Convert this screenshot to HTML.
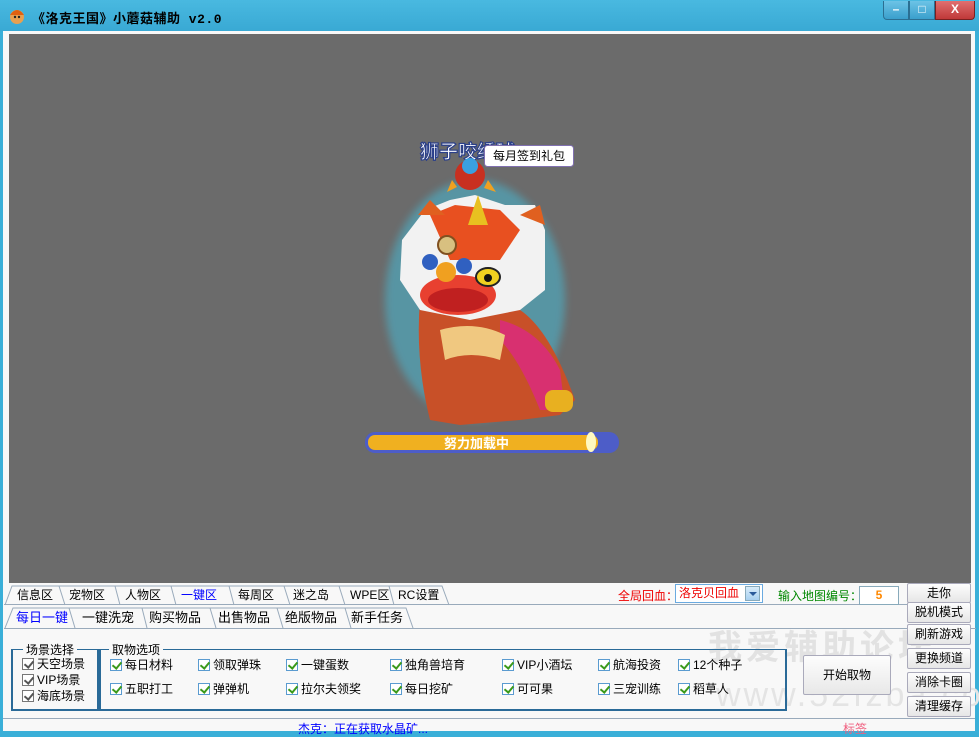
<!DOCTYPE html>
<html><head><meta charset="utf-8"><style>
*{margin:0;padding:0;box-sizing:border-box}
body{width:979px;height:734px;overflow:hidden;background:#3aafd8;font-family:"Liberation Sans","Noto Sans CJK SC",sans-serif;font-size:12px;position:relative}
.a{position:absolute}
.title{left:0;top:0;width:979px;height:31px;background:linear-gradient(#49b9e0,#39a9d4)}
.tt{left:32px;top:8px;font-size:13px;font-weight:bold;color:#000;letter-spacing:0.5px;font-family:"Liberation Mono","Noto Sans CJK SC",monospace}
.wb{top:1px;height:19px;border:1px solid #2b6f92;border-top:none;color:#fff;text-align:center;font-weight:bold;font-size:12px;line-height:17px}
.client{left:3px;top:31px;width:972px;height:700px;background:#f8f8f8}
.game{left:9px;top:34px;width:962px;height:549px;background:#6b6b6b}
.cb{display:inline-block;width:12px;height:12px;border:1px solid #5a9bd0;background:#fff;position:relative;vertical-align:-2px;margin-right:3px}
.cb:after{content:"";position:absolute;left:3px;top:0px;width:4px;height:7px;border:solid #3a9a1a;border-width:0 2px 2px 0;transform:rotate(40deg)}
.g .cb{border-color:#777}.g .cb:after{border-color:#555}
.it{position:absolute;font-size:12px;white-space:nowrap}
.btn{left:907px;width:64px;height:21px;border:1px solid #aab;background:linear-gradient(#fdfdfd,#e6e6e6);font-size:12px;text-align:center;line-height:19px;border-radius:2px}
</style></head><body>
<div class="a title"></div>
<svg class="a" style="left:8px;top:7px" width="18" height="18"><circle cx="9" cy="10" r="7" fill="#e8a050"/><path d="M2 8 Q9 -2 16 8 Z" fill="#e06010"/><circle cx="7" cy="10" r="1.2" fill="#222"/><circle cx="11" cy="10" r="1.2" fill="#222"/></svg>
<div class="a tt">《洛克王国》小蘑菇辅助 v2.0</div>
<div class="a wb" style="left:883px;width:26px;background:linear-gradient(#6cc3e6,#3a9fcc);border-radius:0 0 0 4px">–</div>
<div class="a wb" style="left:909px;width:26px;background:linear-gradient(#6cc3e6,#3a9fcc)">□</div>
<div class="a wb" style="left:935px;width:40px;background:linear-gradient(#e07070,#c03838);border-color:#7a2020;border-radius:0 0 4px 0">X</div>
<div class="a client"></div>
<div class="a game">
<svg width="962" height="549" style="position:absolute;left:0;top:0">
<defs><filter id="gl"><feGaussianBlur stdDeviation="4"/></filter></defs>
<g transform="translate(-9,-34)">
<ellipse cx="475" cy="300" rx="90" ry="120" fill="#3fc8e8" opacity="0.45" filter="url(#gl)"/>
<text x="420" y="158" font-size="19" font-weight="bold" fill="#fff" stroke="#2a3f8a" stroke-width="1.2" font-family="WenQuanYi Zen Hei,Noto Sans CJK SC,sans-serif">狮子咬绣球</text>
<circle cx="470" cy="175" r="15" fill="#c83020"/><circle cx="470" cy="166" r="8" fill="#3aa0e0"/>
<path d="M452 180 l-5 12 l10-5z M488 180 l8 12 l-12-4z" fill="#f0a020"/>
<path d="M420 300 Q415 360 430 420 L460 425 L520 420 L560 415 L575 400 Q550 330 520 310Z" fill="#c85028"/>
<path d="M500 320 Q540 330 560 370 L565 410 L540 410 Q520 360 500 340Z" fill="#d83070"/>
<rect x="545" y="390" width="28" height="22" rx="8" fill="#e8b020"/>
<path d="M440 330 Q475 320 505 335 L500 360 Q470 350 445 360Z" fill="#f0c880"/>
<path d="M425 210 L450 200 L475 195 L505 205 L535 205 L545 230 L545 290 L520 310 L470 320 L420 310 L400 280 L402 240 Z" fill="#f2f2f2"/>
<path d="M430 215 L455 205 L500 210 L520 230 L500 260 L450 260 Z" fill="#e85020"/>
<path d="M468 225 L478 195 L488 225Z" fill="#e8c020"/>
<path d="M418 215 L430 200 L445 215Z M520 215 L540 205 L545 225Z" fill="#e06020"/>
<ellipse cx="458" cy="295" rx="38" ry="20" fill="#e84030"/>
<ellipse cx="458" cy="300" rx="30" ry="12" fill="#c02020"/>
<circle cx="447" cy="245" r="9" fill="#d8c080" stroke="#805020" stroke-width="2"/>
<circle cx="430" cy="262" r="8" fill="#3060c0"/><circle cx="464" cy="266" r="8" fill="#3060c0"/>
<circle cx="446" cy="272" r="10" fill="#f0a020"/>
<ellipse cx="488" cy="277" rx="12" ry="9" fill="#f0d020" stroke="#222" stroke-width="2"/><circle cx="488" cy="278" r="4" fill="#111"/>
<rect x="365" y="432" width="254" height="21" rx="10" fill="#4d5dc8"/>
<rect x="368" y="435" width="230" height="15" rx="7" fill="#f0b020"/>
<ellipse cx="591" cy="442" rx="5" ry="10" fill="#fff8c0"/>
<text x="444" y="448" font-size="13" font-weight="bold" fill="#fff" font-family="WenQuanYi Zen Hei,Noto Sans CJK SC,sans-serif">努力加载中</text>
<rect x="484.5" y="145.5" width="89" height="21" rx="3" fill="#fff" stroke="#8070b0"/>
<text x="493" y="160" font-size="12" fill="#000" font-family="Noto Sans CJK SC,sans-serif">每月签到礼包</text>
</g></svg>
</div>
<div class="it" style="left:708px;top:620px;font-size:34px;font-weight:bold;color:#e2e2e2;letter-spacing:4px">我爱辅助论坛</div>
<div class="it" style="left:716px;top:676px;font-size:34px;color:#e4e4e4;letter-spacing:3px">www.52fzba.com</div>
<!-- tab row 1 -->
<div class="a" style="left:4px;top:585px;width:903px;height:20px;border-bottom:1px solid #9ab"></div>
<div class="a" style="left:10px;top:585px;font-size:12px;line-height:20px;white-space:nowrap">
<span class="a" style="left:7px">信息区</span><span class="a" style="left:59px">宠物区</span><span class="a" style="left:115px">人物区</span><span class="a" style="left:171px;color:#00f">一键区</span><span class="a" style="left:228px">每周区</span><span class="a" style="left:283px">迷之岛</span><span class="a" style="left:340px">WPE区</span><span class="a" style="left:388px">RC设置</span></div>
<svg class="a" style="left:4px;top:585px" width="450" height="21"><g fill="none" stroke="#9ab"><path d="M1 20 L8 1 H55 L61 20 M55 1 H111 L116 20 M111 1 H167 L172 20 M167 1 H225 L230 20 M225 1 H280 L286 20 M280 1 H335 L341 20 M335 1 H385 L390 20 M385 1 H438 L445 20"/></g></svg>
<!-- tab row 2 -->
<div class="a" style="left:4px;top:628px;width:972px;border-top:1px solid #9ab"></div>
<svg class="a" style="left:4px;top:607px" width="420" height="22"><g fill="none" stroke="#9ab"><path d="M1 21 L9 1 H65 L71 21 M65 1 H138 L143 21 M138 1 H206 L212 21 M206 1 H273 L279 21 M273 1 H341 L347 21 M341 1 H402 L409 21"/></g></svg>
<div class="a" style="left:16px;top:608px;font-size:13px;line-height:20px;white-space:nowrap">
<span class="a" style="left:0;color:#00f">每日一键</span><span class="a" style="left:66px">一键洗宠</span><span class="a" style="left:133px">购买物品</span><span class="a" style="left:202px">出售物品</span><span class="a" style="left:269px">绝版物品</span><span class="a" style="left:335px">新手任务</span></div>
<div class="a" style="left:3px;top:718px;width:972px;border-top:1px solid #9ab"></div>
<!-- group boxes -->
<div class="a" style="left:11px;top:649px;width:88px;height:62px;border:2px solid #2a6a98;border-top-width:1px"></div>
<div class="a" style="left:23px;top:641px;background:#f8f8f8;padding:0 3px;font-size:12px">场景选择</div>
<div class="a" style="left:99px;top:649px;width:688px;height:62px;border:2px solid #2a6a98;border-top-width:1px"></div>
<div class="a" style="left:109px;top:641px;background:#f8f8f8;padding:0 3px;font-size:12px">取物选项</div>
<div class="g"><div class="it" style="left:22px;top:655px"><span class="cb"></span>天空场景</div><div class="it" style="left:22px;top:671px"><span class="cb"></span>VIP场景</div><div class="it" style="left:22px;top:687px"><span class="cb"></span>海底场景</div></div>
<div class="it" style="left:110px;top:656px"><span class="cb"></span>每日材料</div>
<div class="it" style="left:198px;top:656px"><span class="cb"></span>领取弹珠</div>
<div class="it" style="left:286px;top:656px"><span class="cb"></span>一键蛋数</div>
<div class="it" style="left:390px;top:656px"><span class="cb"></span>独角兽培育</div>
<div class="it" style="left:502px;top:656px"><span class="cb"></span>VIP小酒坛</div>
<div class="it" style="left:598px;top:656px"><span class="cb"></span>航海投资</div>
<div class="it" style="left:678px;top:656px"><span class="cb"></span>12个种子</div>
<div class="it" style="left:110px;top:680px"><span class="cb"></span>五职打工</div>
<div class="it" style="left:198px;top:680px"><span class="cb"></span>弹弹机</div>
<div class="it" style="left:286px;top:680px"><span class="cb"></span>拉尔夫领奖</div>
<div class="it" style="left:390px;top:680px"><span class="cb"></span>每日挖矿</div>
<div class="it" style="left:502px;top:680px"><span class="cb"></span>可可果</div>
<div class="it" style="left:598px;top:680px"><span class="cb"></span>三宠训练</div>
<div class="it" style="left:678px;top:680px"><span class="cb"></span>稻草人</div>
<div class="a" style="left:803px;top:655px;width:88px;height:40px;border:1px solid #aab;background:linear-gradient(#fdfdfd,#e8e8e8);text-align:center;line-height:38px;font-size:12px;border-radius:2px">开始取物</div>
<div class="it" style="left:618px;top:587px;color:#e00">全局回血：</div>
<div class="a" style="left:675px;top:584px;width:88px;height:19px;border:1px solid #6aaae0;background:#fff;color:#e00;font-size:12px;line-height:17px;padding-left:3px">洛克贝回血</div>
<div class="a" style="left:745px;top:586px;width:15px;height:15px;background:linear-gradient(#d8ecfa,#a8d0f0);border:1px solid #8ab;"><div style="margin:5px 3px;border:4px solid transparent;border-top:4px solid #2a5a9a;width:0;height:0"></div></div>
<div class="it" style="left:778px;top:587px;color:#080">输入地图编号：</div>
<div class="a" style="left:859px;top:586px;width:40px;height:19px;border:1px solid #8ab;background:#fff;color:#f80;font-weight:bold;text-align:center;line-height:17px">5</div>
<div class="a btn" style="top:583px;height:20px;line-height:18px">走你</div>
<div class="a btn" style="top:602px">脱机模式</div>
<div class="a btn" style="top:624px">刷新游戏</div>
<div class="a btn" style="top:648px">更换频道</div>
<div class="a btn" style="top:672px">消除卡圈</div>
<div class="a btn" style="top:696px">清理缓存</div>
<div class="it" style="left:298px;top:720px;color:#00f">杰克：正在获取水晶矿...</div>
<div class="it" style="left:843px;top:720px;color:#f06080">标签</div>
</body></html>
